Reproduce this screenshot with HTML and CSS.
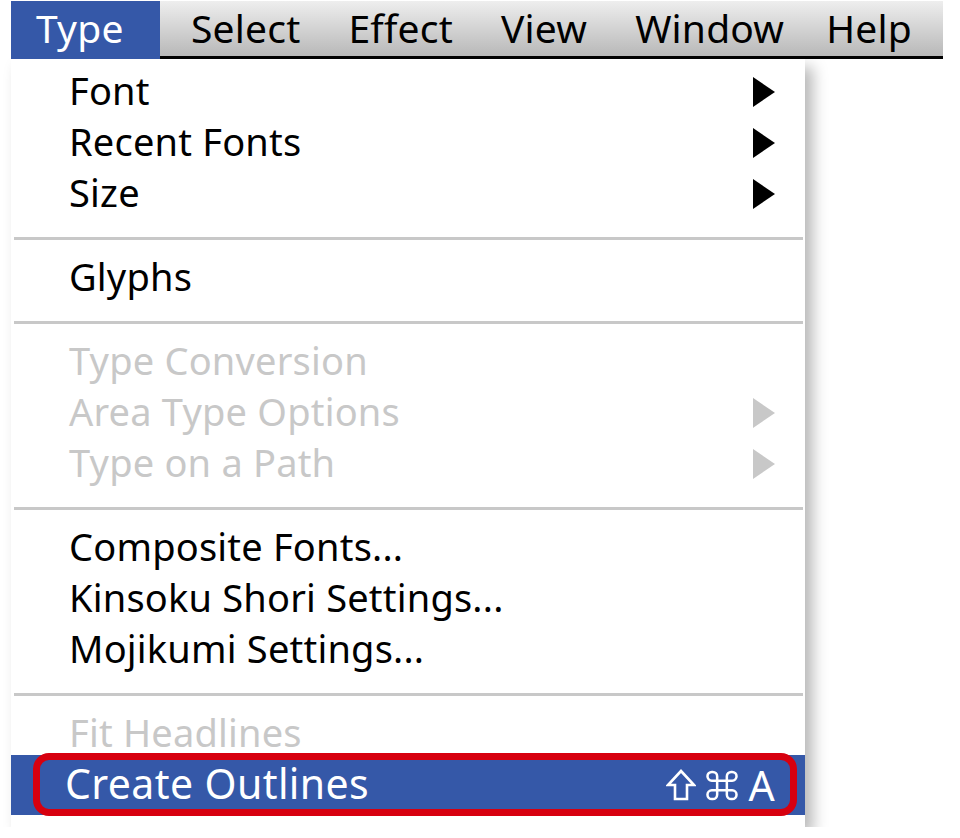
FILE: index.html
```html
<!DOCTYPE html>
<html lang="en">

<head>
  <meta charset="UTF-8">
  <meta name="viewport" content="width=device-width, initial-scale=1.0">
  <title>Type menu</title>
  <link rel="stylesheet" href="styles.css">
</head>

<body>
  <div class="menubar">
    <a class="menubar-item active" href="javascript:;">Type</a>
    <div class="menubar-rest">
      <a class="menubar-item" href="javascript:;">Select</a>
      <a class="menubar-item" href="javascript:;">Effect</a>
      <a class="menubar-item" href="javascript:;">View</a>
      <a class="menubar-item" href="javascript:;">Window</a>
      <a class="menubar-item" href="javascript:;">Help</a>
    </div>
  </div>

  <div class="dropdown">
    <div class="menu-group">
      <div class="menu-item"><span>Font</span><i class="arrow"></i></div>
      <div class="menu-item"><span>Recent Fonts</span><i class="arrow"></i></div>
      <div class="menu-item"><span>Size</span><i class="arrow"></i></div>
    </div>
    <div class="menu-sep"></div>
    <div class="menu-group">
      <div class="menu-item"><span>Glyphs</span></div>
    </div>
    <div class="menu-sep"></div>
    <div class="menu-group">
      <div class="menu-item disabled"><span>Type Conversion</span></div>
      <div class="menu-item disabled"><span>Area Type Options</span><i class="arrow"></i></div>
      <div class="menu-item disabled"><span>Type on a Path</span><i class="arrow"></i></div>
    </div>
    <div class="menu-sep"></div>
    <div class="menu-group">
      <div class="menu-item"><span>Composite Fonts...</span></div>
      <div class="menu-item"><span>Kinsoku Shori Settings...</span></div>
      <div class="menu-item"><span>Mojikumi Settings...</span></div>
    </div>
    <div class="menu-sep"></div>
    <div class="menu-group">
      <div class="menu-item disabled"><span>Fit Headlines</span></div>
      <div class="menu-item selected">
        <span>Create Outlines</span>
        <span class="shortcut">
          <!-- shift -->
          <svg viewBox="0 0 30 32" width="30" height="32"><path d="M15 2 L28 16 H21 V30 H9 V16 H2 Z" fill="none" stroke="#fff" stroke-width="2.6" stroke-linejoin="miter"/></svg>
          <!-- command -->
          <svg viewBox="0 0 34 32" width="34" height="31"><path d="M12 11V6.5A4.5 4.5 0 0 0 7.5 2h-1A4.5 4.5 0 0 0 2 6.5v0A4.5 4.5 0 0 0 6.5 11H27.5A4.5 4.5 0 0 0 32 6.5v0A4.5 4.5 0 0 0 27.5 2h-1A4.5 4.5 0 0 0 22 6.5V25.5A4.5 4.5 0 0 0 26.5 30h1A4.5 4.5 0 0 0 32 25.5v0A4.5 4.5 0 0 0 27.5 21H6.5A4.5 4.5 0 0 0 2 25.5v0A4.5 4.5 0 0 0 6.5 30h1A4.5 4.5 0 0 0 12 25.5Z" fill="none" stroke="#fff" stroke-width="2.6"/></svg>
          <span>A</span>
        </span>
        <!-- 红框标注 -->
        <div class="mark"></div>
      </div>
    </div>
  </div>
</body>

</html>
```

FILE: styles.css
```css
div,
span,
a {
  padding: 0px;
  margin: 0px;
}

body {
  margin: 0;
  background: #fff;
  font-family: "Noto Sans", "Open Sans", sans-serif;
  color: #000;
}

a {
  text-decoration: none;
  color: #000;
}

.menubar {
  display: flex;
  margin: 1px 0 0 11px;
  width: 932px;
  height: 58px;
}

.menubar-item {
  font-size: 39px;
  line-height: 54px;
  letter-spacing: 0.2px;
}

.menubar-item.active {
  width: 149px;
  padding-left: 25px;
  box-sizing: border-box;
  background: #3558a8;
  color: #fff;
}

.menubar-rest {
  flex: 1;
  display: flex;
  gap: 48px;
  padding-left: 31px;
  background: linear-gradient(#eeeeee, #b8b8b8);
  border-bottom: 3px solid #000;
}

.menubar-rest .menubar-item:last-child {
  margin-left: -6px;
}

.dropdown {
  width: 794px;
  margin-left: 11px;
  padding: 7px 0 12px;
  background: #fff;
  box-shadow: 8px 8px 14px rgba(0, 0, 0, .28);
}

.menu-item {
  position: relative;
  display: flex;
  align-items: center;
  justify-content: space-between;
  box-sizing: border-box;
  height: 51px;
  padding: 0 30px 4px 58px;
  font-size: 38px;
  letter-spacing: 0.2px;
}

.menu-item .arrow {
  margin-top: 4px;
}

.menu-item.disabled {
  color: #c8c8c8;
}

.arrow {
  width: 0;
  height: 0;
  border-top: 15px solid transparent;
  border-bottom: 15px solid transparent;
  border-left: 22px solid #000;
}

.disabled .arrow {
  border-left-color: #c8c8c8;
}

.menu-sep {
  height: 3px;
  margin: 18px 2px 12px 3px;
  background: #c8c8c8;
}

.menu-item.selected {
  height: 60px;
  margin-top: -4px;
  padding-left: 54px;
  background: #3558a8;
  color: #fff;
  font-size: 41px;
  letter-spacing: 0.4px;
}

.shortcut {
  display: flex;
  align-items: center;
  gap: 9px;
  margin-top: 4px;
  font-size: 41px;
}

.mark {
  position: absolute;
  left: 22px;
  right: 8px;
  top: -2px;
  bottom: -1px;
  border: 7px solid #d7000f;
  border-radius: 16px;
}
```
